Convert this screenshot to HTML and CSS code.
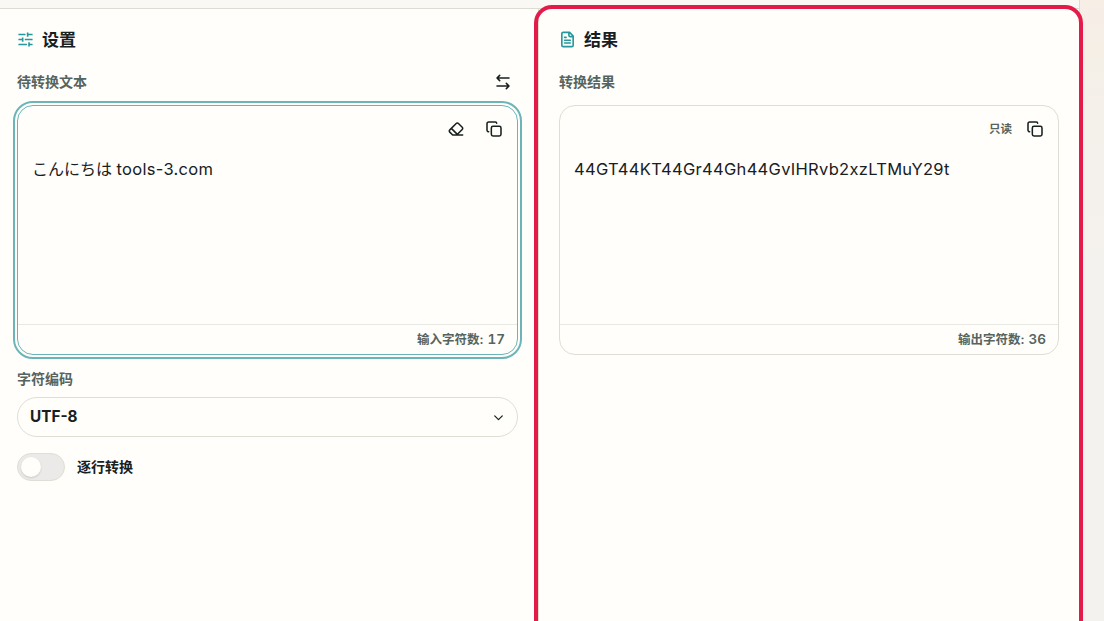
FILE: index.html
```html
<!DOCTYPE html>
<html lang="zh-CN">
<head>
    <meta charset="UTF-8">
    <meta name="viewport" content="width=device-width, initial-scale=1.0">
    <title>Base64</title>
    <link rel="stylesheet" href="styles.css">
</head>
<body>
    <div class="page">
        <div class="toolbar"></div>
        <main class="panels">
            <section class="panel settings">
                <h2 class="panel-title">
                    <svg class="title-icon" viewBox="0 0 24 24"><path d="M2 5h10M15 5h7M15 2v6M2 12h5M11 12h11M8 9v6M2 19h12M18 19h4M17 16v6"/></svg>
                    <span>设置</span>
                </h2>
                <div class="label-row">
                    <label for="source">待转换文本</label>
                    <button class="icon-button swap" aria-label="交换">
                        <svg viewBox="0 0 24 24"><path d="M7 2 3 6l4 4M3 6h18M17 14l4 4-4 4M21 18H3"/></svg>
                    </button>
                </div>
                <div class="box focused">
                    <div class="box-tools">
                        <button class="icon-button" aria-label="清空">
                            <svg viewBox="0 0 24 24"><path d="m7 21-4.300-4.300c-1-1-1-2.500 0-3.400l9.600-9.600c1-1 2.500-1 3.400 0l5.600 5.600c1 1 1 2.500 0 3.400L13 21M22 21H7M5 11l9 9"/></svg>
                        </button>
                        <button class="icon-button" aria-label="复制">
                            <svg viewBox="0 0 24 24"><rect x="8" y="8" width="14.500" height="14.500" rx="2.500"/><path d="M4 16c-1.100 0-2.500-.9-2.500-2V4c0-1.100.9-2.500 2.500-2.500h10c1.100 0 2 .9 2 2"/></svg>
                        </button>
                    </div>
                    <div class="box-text" id="source"><span>こんにちは</span> <span class="latin">tools-3.com</span></div>
                    <div class="box-count">输入字符数: <span class="number">17</span></div>
                </div>
                <div class="field-label">字符编码</div>
                <div class="select">
                    <span>UTF-8</span>
                    <svg viewBox="0 0 24 24"><path d="m5 9 7 7 7-7"/></svg>
                </div>
                <div class="switch-row">
                    <div class="switch"><div class="knob"></div></div>
                    <span class="switch-label">逐行转换</span>
                </div>
            </section>
            <section class="panel result">
                <h2 class="panel-title">
                    <svg class="title-icon" viewBox="0 0 24 24"><path d="M15 2H6a2 2 0 0 0-2 2v16a2 2 0 0 0 2 2h12a2 2 0 0 0 2-2V7ZM14 2v4a2 2 0 0 0 2 2h4M10 9H8M16 13H8M16 17H8"/></svg>
                    <span>结果</span>
                </h2>
                <div class="label-row"><span>转换结果</span></div>
                <div class="box">
                    <div class="box-tools">
                        <span class="readonly">只读</span>
                        <button class="icon-button" aria-label="复制">
                            <svg viewBox="0 0 24 24"><rect x="8" y="8" width="14.500" height="14.500" rx="2.500"/><path d="M4 16c-1.100 0-2.500-.9-2.500-2V4c0-1.100.9-2.500 2.500-2.500h10c1.100 0 2 .9 2 2"/></svg>
                        </button>
                    </div>
                    <div class="box-text"><span class="latin">44GT44KT44Gr44Gh44GvIHRvb2xzLTMuY29t</span></div>
                    <div class="box-count">输出字符数: <span class="number">36</span></div>
                </div>
            </section>
        </main>
        <div class="highlight"></div>
    </div>
</body>
</html>
```

FILE: styles.css
```css
* {
    box-sizing: border-box;
}

body {
    margin: 0;
    height: 621px;
    overflow: hidden;
    background: linear-gradient(180deg, #f7eee6 0, #f5efe6 50px, #f4f0ea 110px, #f4f2ee 260px, #f3f2ef 100%);
    color: #17201f;
    font-family: "Inter", "Noto Sans CJK SC", sans-serif;
    font-size: 16px;
}

/* Page shell */
.page {
    position: relative;
    display: flex;
    flex-direction: column;
    width: 1080px;
    height: 621px;
    border-right: 1px solid #dcdcd0;
    background: #fffefa;
}

.toolbar {
    height: 9px;
    background: #f9f8f4;
    border-bottom: 1px solid #dcdcd0;
}

.panels {
    flex: 1;
    display: grid;
    grid-template-columns: 539px 540px;
}

.panel {
    padding: 17px 20px 0;
}

.settings {
    padding-left: 17px;
    border-right: 1px solid #dcdcd0;
}

.panel-title {
    display: flex;
    align-items: center;
    gap: 8px;
    height: 28px;
    margin: 0;
    font-size: 17px;
    font-weight: 700;
}

.panel-title span {
    padding-bottom: 4px;
}

/* Icons */
svg {
    display: block;
    fill: none;
    stroke: currentColor;
    stroke-width: 2.3;
    stroke-linecap: round;
    stroke-linejoin: round;
}

.title-icon {
    width: 17px;
    height: 17px;
    margin-top: -1px;
    color: #24989c;
}

.settings .title-icon {
    stroke-linecap: butt;
}

.icon-button {
    display: flex;
    padding: 0;
    border: 0;
    background: none;
    color: #17201f;
}

.icon-button svg {
    width: 16px;
    height: 16px;
}

.label-row {
    display: flex;
    align-items: center;
    justify-content: space-between;
    height: 28px;
    margin: 14px 0 9px;
    padding-right: 7px;
    color: #56645f;
    font-size: 14px;
    font-weight: 700;
}

.label-row label,
.label-row span {
    padding-bottom: 3px;
}

/* Text boxes */
.box {
    display: flex;
    flex-direction: column;
    height: 250px;
    border: 1px solid #dedfd4;
    border-radius: 16px;
}

.settings .box {
    width: 501px;
}

.focused {
    border-color: #6bb5b8;
    outline: 2px solid #6bb5b8;
    outline-offset: 2px;
}

.box-tools {
    display: flex;
    align-items: center;
    justify-content: flex-end;
    gap: 22px;
    height: 46px;
    padding-right: 15px;
}

.readonly {
    margin-right: -7px;
    padding-bottom: 3px;
    color: #56645f;
    font-size: 11.5px;
    font-weight: 700;
}

.box-text {
    flex: 1;
    padding: 5px 14px;
    line-height: 24px;
    white-space: nowrap;
}

.box-text span:first-child {
    font-family: "Inter", "Noto Sans CJK JP", sans-serif;
}

.box-text .latin {
    font-size: 16.5px;
    letter-spacing: 0.3px;
}

.box-count {
    height: 30px;
    padding-right: 12px;
    border-top: 1px solid #e9e9e4;
    color: #56645f;
    font-size: 12.5px;
    font-weight: 600;
    line-height: 29px;
    text-align: right;
    word-spacing: 1px;
}

.number {
    font-size: 13.5px;
    font-variant-numeric: tabular-nums;
}

/* Encoding select */
.field-label {
    height: 20px;
    margin: 14px 0 8px;
    color: #56645f;
    font-size: 14px;
    font-weight: 700;
    line-height: 20px;
}

.select {
    display: flex;
    align-items: center;
    justify-content: space-between;
    width: 501px;
    height: 40px;
    padding: 0 12px 2px;
    border: 1px solid #dedfd4;
    border-radius: 20px;
    font-size: 15.3px;
    font-weight: 700;
}

.select svg {
    width: 13px;
    height: 13px;
    margin-top: 2px;
}

/* Line by line switch */
.switch-row {
    display: flex;
    align-items: center;
    gap: 12px;
    margin-top: 16px;
    font-size: 14px;
    font-weight: 700;
}

.switch-label {
    padding-bottom: 2px;
}

.switch {
    width: 48px;
    height: 28px;
    padding: 3px;
    border: 1px solid #dedfd4;
    border-radius: 14px;
    background: #ebeae8;
}

.knob {
    width: 20px;
    height: 20px;
    border-radius: 50%;
    background: #fffefa;
    box-shadow: 0 1px 2px rgba(0, 0, 0, 0.15);
}

/* Highlight around the result panel */
.highlight {
    position: absolute;
    top: 5px;
    left: 534px;
    width: 549px;
    height: 640px;
    border: 4px solid #e31b4a;
    border-radius: 18px;
}
```
